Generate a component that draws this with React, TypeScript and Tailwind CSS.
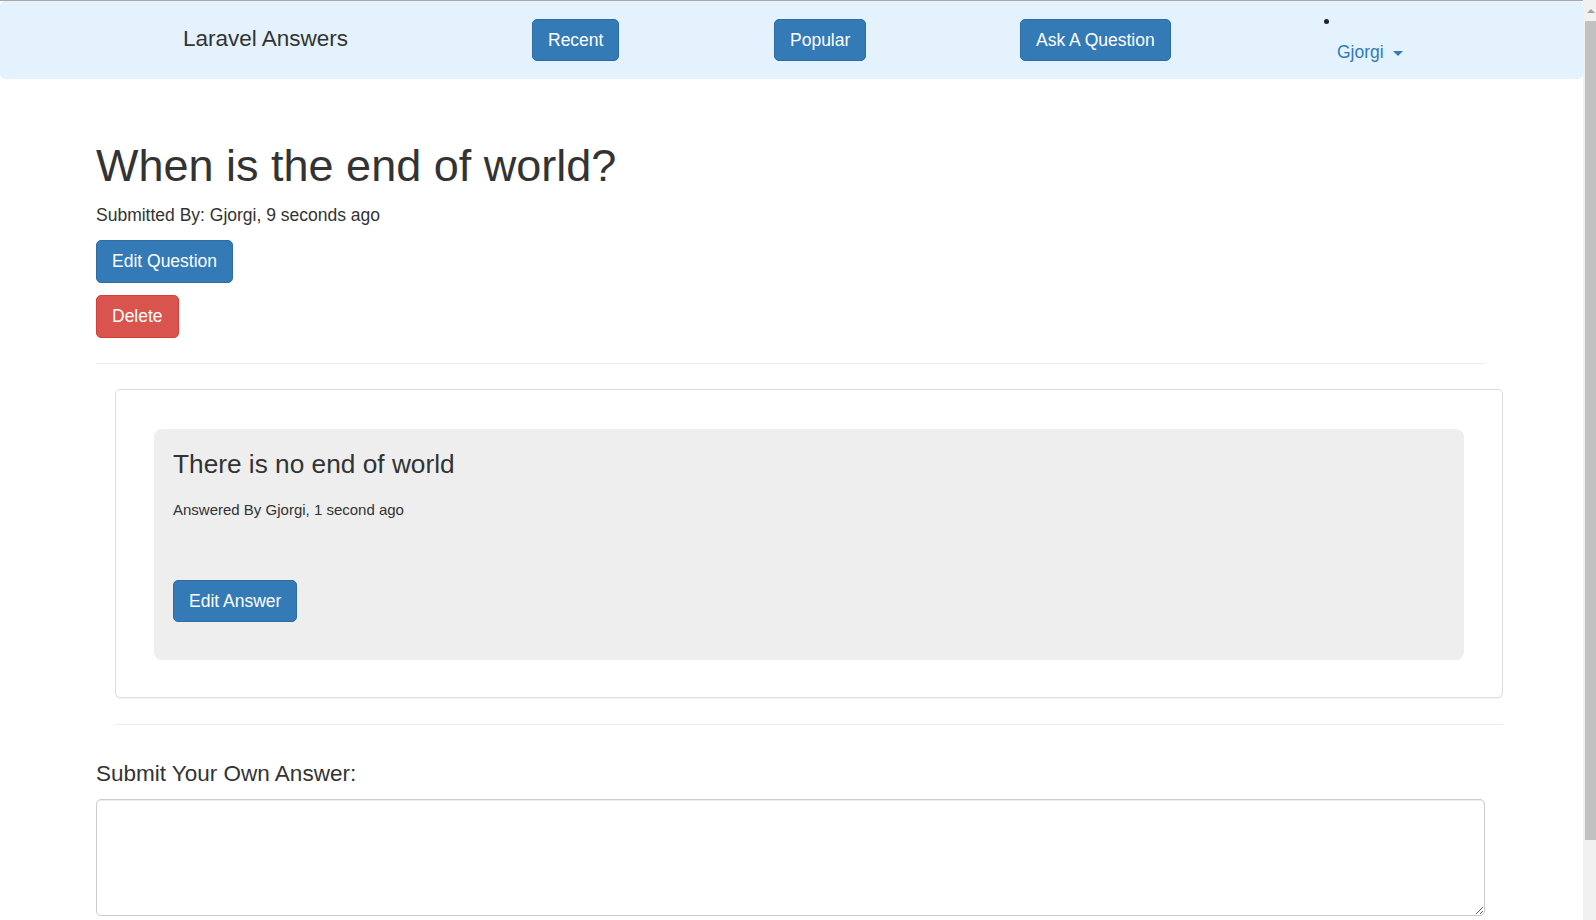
const font = { fontFamily: '"Liberation Sans", Arial, Helvetica, sans-serif' };

function NavButton({ label }: { label: string }) {
  return (
    <button className="h-[42px] px-[15px] rounded-[5px] border border-[#2e6da4] bg-[#337ab7] text-white text-[17.5px] leading-[25px]">
      {label}
    </button>
  );
}

function Navbar() {
  return (
    <div className="h-[78px] bg-[#e3f2fd] rounded-[5px] flex items-start">
      <div className="w-[532px] pl-[183px] pt-[24px] text-[22.5px] leading-[28px] text-[#333]">Laravel Answers</div>
      <div className="w-[242px] pt-[18px]">
        <NavButton label="Recent" />
      </div>
      <div className="w-[246px] pt-[18px]">
        <NavButton label="Popular" />
      </div>
      <div className="w-[306px] pt-[18px]">
        <NavButton label="Ask A Question" />
      </div>
      <div className="flex flex-col pt-[18px]">
        <div className="h-[5px] w-[5px] rounded-full bg-[#222] -ml-[2px]" />
        <div className="flex items-center pl-[11px] pt-[16px] text-[17.5px] leading-[25px] text-[#337ab7]">
          <span>Gjorgi</span>
          <span className="ml-[9px] mt-[1px] h-0 w-0 border-x-[5px] border-t-[5px] border-x-transparent border-t-[#337ab7]" />
        </div>
      </div>
    </div>
  );
}

function Scrollbar() {
  return (
    <div className="w-[13px] h-[920px] bg-[#f1f1f1] flex flex-col items-end">
      <div className="h-[21px] w-full flex items-center justify-center">
        <span className="h-0 w-0 border-x-[4px] border-b-[4px] border-x-transparent border-b-[#a3a3a3] ml-[2px]" />
      </div>
      <div className="w-[11px] h-[819px] bg-[#c1c1c1]" />
    </div>
  );
}

export default function App() {
  return (
    <div className="w-[1596px] h-[920px] overflow-hidden bg-white flex" style={font}>
      <div className="w-[1583px] h-[920px] overflow-hidden">
        <div className="h-px bg-[#a9a9a9]" />
        <Navbar />
        <div className="ml-[96px] w-[1389px] text-[#333]">
          <h1 className="mt-[62px] text-[45px] leading-[49.5px]">When is the end of world?</h1>
          <p className="mt-[12px] text-[17.5px] leading-[25px]">Submitted By: Gjorgi, 9 seconds ago</p>
          <button className="mt-[12.5px] block h-[43px] px-[15px] rounded-[5px] border border-[#2e6da4] bg-[#337ab7] text-white text-[17.5px] leading-[25px]">
            Edit Question
          </button>
          <button className="mt-[12px] block h-[43px] px-[15px] rounded-[5px] border border-[#d43f3a] bg-[#d9534f] text-white text-[17.5px] leading-[25px]">
            Delete
          </button>
          <hr className="mt-[25px] border-t border-[#eee]" />

          <div className="ml-[19px] w-[1388px]">
            <div className="mt-[25px] h-[309px] border border-[#ddd] rounded-[5px] shadow-[0_1px_1px_rgba(0,0,0,0.05)] pt-[38.5px] pl-[38px]">
              <div className="w-[1310px] h-[231px] bg-[#eee] rounded-[8px] pt-[17px] px-[19px]">
                <p className="text-[26.25px] leading-[37.5px]">There is no end of world</p>
                <p className="mt-[13.5px] text-[15px] leading-[25px]">Answered By Gjorgi, 1 second ago</p>
                <button className="mt-[58.5px] block h-[42px] px-[15px] rounded-[5px] border border-[#2e6da4] bg-[#337ab7] text-white text-[17.5px] leading-[25px]">
                  Edit Answer
                </button>
              </div>
            </div>
            <hr className="mt-[25.5px] border-t border-[#eee]" />
          </div>

          <h4 className="mt-[37px] text-[22.5px] leading-[24.75px]">Submit Your Own Answer:</h4>
          <textarea className="mt-[13px] block w-[1389px] h-[117px] border border-[#ccc] rounded-[5px] shadow-[inset_0_1px_1px_rgba(0,0,0,0.075)] outline-none" />
        </div>
      </div>
      <Scrollbar />
    </div>
  );
}
